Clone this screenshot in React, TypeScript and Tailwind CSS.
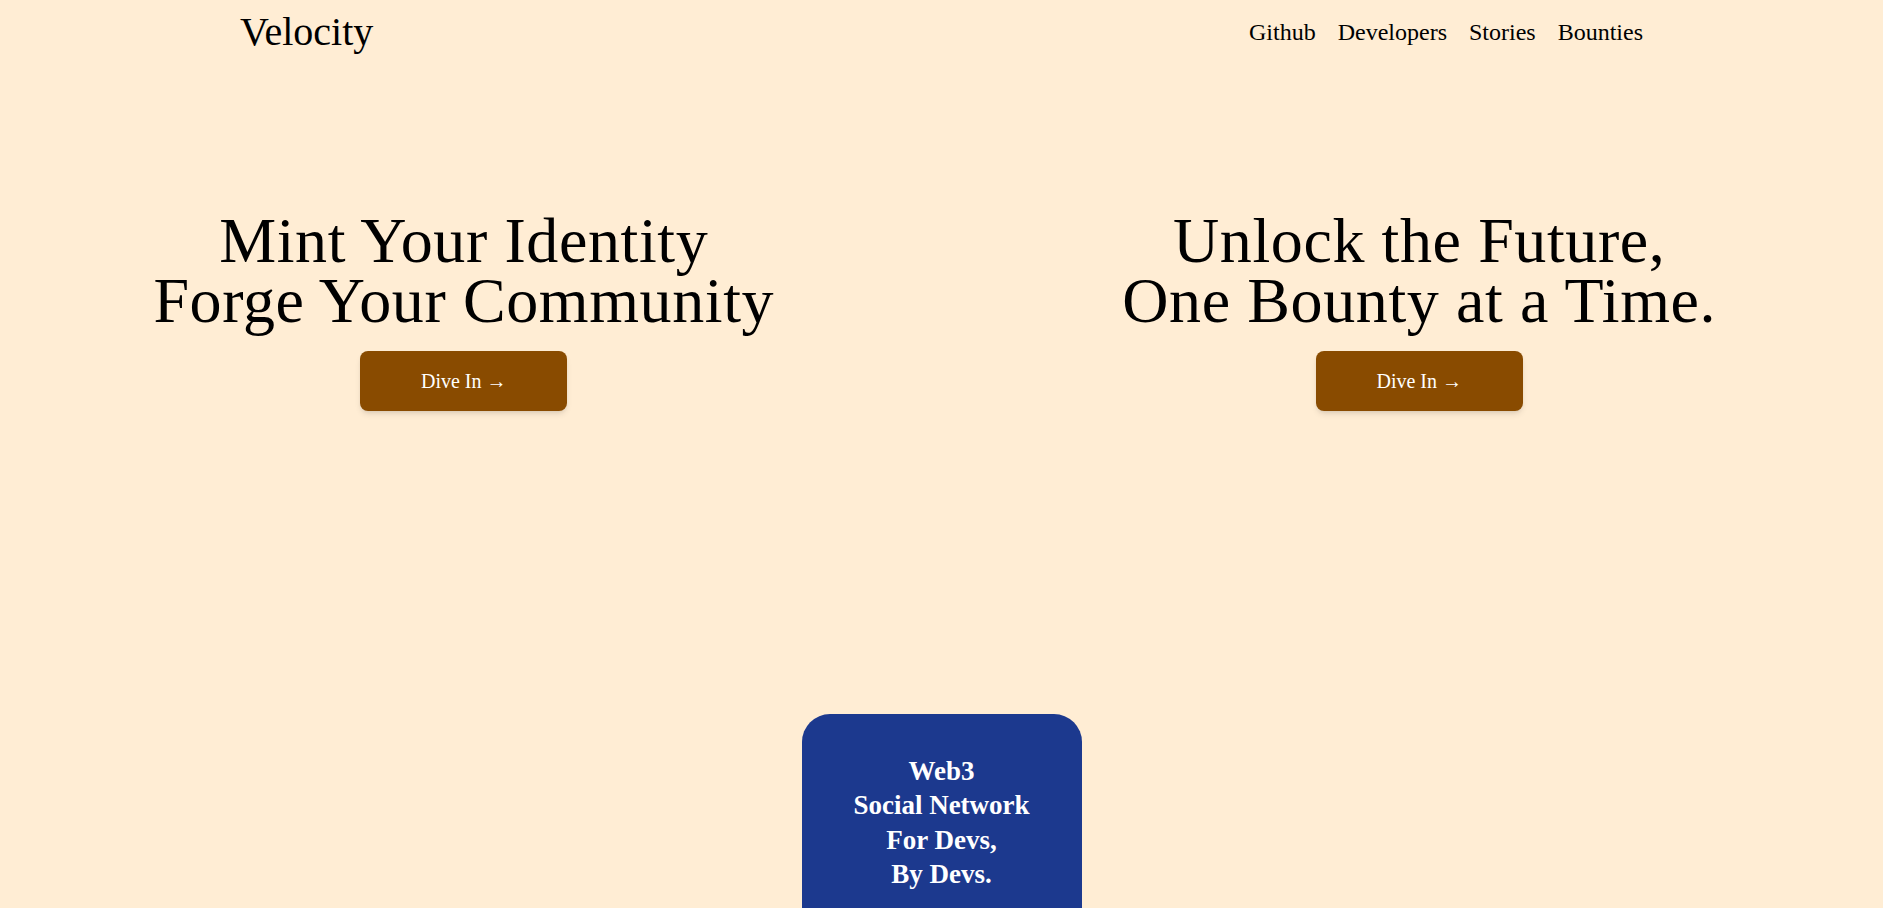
import React from "react";

function Hero({ lines }: { lines: string[] }) {
  return (
    <div className="flex flex-col items-center">
      <h1 className="text-center text-[64px] leading-[60px] tracking-[0.6px] font-normal text-black">
        {lines[0]}
        <br />
        {lines[1]}
      </h1>
      <button className="mt-5 w-[207px] py-4 text-xl leading-7 text-white bg-yellow-800 rounded-lg shadow-md">
        Dive In →
      </button>
    </div>
  );
}

export default function App() {
  return (
    <div
      className="min-h-screen bg-orange-100 text-black"
      style={{ fontFamily: '"Liberation Serif", "Times New Roman", serif' }}
    >
      <header className="h-16 px-60 flex items-center justify-between">
        <a className="text-[40px] leading-none">Velocity</a>
        <nav className="flex items-center gap-[22px] text-2xl">
          <a>Github</a>
          <a>Developers</a>
          <a>Stories</a>
          <a>Bounties</a>
        </nav>
      </header>

      <section className="pt-[147px] pb-[303px] grid grid-cols-2 gap-[28px]">
        <Hero lines={["Mint Your Identity", "Forge Your Community"]} />
        <Hero lines={["Unlock the Future,", "One Bounty at a Time."]} />
      </section>

      <section className="flex justify-center">
        <div className="w-[280px] h-[300px] bg-blue-900 rounded-[28px] pt-10 text-center text-white font-bold text-[27px] leading-[34.3px]">
          Web3
          <br />
          Social Network
          <br />
          For Devs,
          <br />
          By Devs.
        </div>
      </section>
    </div>
  );
}
